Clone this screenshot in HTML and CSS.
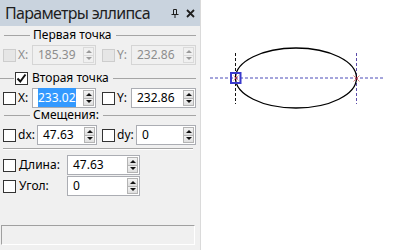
FILE: index.html
```html
<!DOCTYPE html>
<html>
<head>
    <title>Параметры эллипса</title>
    <link rel="stylesheet" href="styles.css">
</head>
<body>
    <div class="panel">
        <div class="title">
            <span class="title-text">Параметры эллипса</span>
            <svg class="pin" width="8" height="9" viewBox="0 0 8 9">
                <path d="M0.5 5.5h7M2.5 0.5h3v5M4 5.5v3.5M2.5 0.5v5" fill="none" stroke="#1e1e1e" stroke-width="1"/>
            </svg>
            <svg class="close" width="9" height="9" viewBox="0 0 9 9">
                <path d="M1 1l7 7M8 1l-7 7" stroke="#1e1e1e" stroke-width="1.8"/>
            </svg>
        </div>

        <div class="legend first">
            <span class="rule lead"></span>
            <span class="legend-text">Первая точка</span>
            <span class="rule"></span>
        </div>
        <div class="row">
            <span class="cb off"></span>
            <span class="lbl off w-xy">X:</span>
            <div class="spin off w-a"><span class="val">185.39</span><span class="arrows"><i><b class="up"></b></i><i><b class="down"></b></i></span></div>
            <span class="cb off gap"></span>
            <span class="lbl off w-xy">Y:</span>
            <div class="spin off w-b"><span class="val">232.86</span><span class="arrows"><i><b class="up"></b></i><i><b class="down"></b></i></span></div>
        </div>

        <div class="legend second">
            <span class="rule lead-short"></span>
            <span class="cb checked">
                <svg width="11" height="11" viewBox="0 0 11 11"><path d="M1.5 5.5l2.8 3l5.2-7" fill="none" stroke="#111" stroke-width="2"/></svg>
            </span>
            <span class="legend-text">Вторая точка</span>
            <span class="rule"></span>
        </div>
        <div class="row">
            <span class="cb"></span>
            <span class="lbl w-xy">X:</span>
            <div class="spin w-a"><span class="val"><span class="sel">233.02</span></span><span class="arrows"><i><b class="up"></b></i><i><b class="down"></b></i></span></div>
            <span class="cb gap"></span>
            <span class="lbl w-xy">Y:</span>
            <div class="spin w-b"><span class="val">232.86</span><span class="arrows"><i><b class="up"></b></i><i><b class="down"></b></i></span></div>
        </div>

        <div class="legend third">
            <span class="rule lead"></span>
            <span class="legend-text">Смещения:</span>
            <span class="rule"></span>
        </div>
        <div class="row">
            <span class="cb"></span>
            <span class="lbl w-dx">dx:</span>
            <div class="spin w-c"><span class="val">47.63</span><span class="arrows"><i><b class="up"></b></i><i><b class="down"></b></i></span></div>
            <span class="cb gap-small"></span>
            <span class="lbl w-dx">dy:</span>
            <div class="spin w-c"><span class="val">0</span><span class="arrows"><i><b class="up"></b></i><i><b class="down"></b></i></span></div>
        </div>

        <div class="separator"></div>

        <div class="row length">
            <span class="cb"></span>
            <span class="lbl w-long">Длина:</span>
            <div class="spin w-d"><span class="val">47.63</span><span class="arrows"><i><b class="up"></b></i><i><b class="down"></b></i></span></div>
        </div>
        <div class="row angle">
            <span class="cb"></span>
            <span class="lbl w-long">Угол:</span>
            <div class="spin w-d"><span class="val">0</span><span class="arrows"><i><b class="up"></b></i><i><b class="down"></b></i></span></div>
        </div>

        <div class="status"></div>
    </div>

    <div class="canvas">
        <svg width="192" height="250" viewBox="0 0 192 250">
            <line x1="9" y1="78" x2="182" y2="78" stroke="#4a4ab8" stroke-width="1" stroke-dasharray="3 2"/>
            <line x1="34.5" y1="53" x2="34.5" y2="104" stroke="#111" stroke-width="1" stroke-dasharray="3 2"/>
            <line x1="155.5" y1="53" x2="155.5" y2="104" stroke="#5a4aa8" stroke-width="1" stroke-dasharray="3 2"/>
            <ellipse cx="95" cy="78" rx="60.5" ry="30" fill="none" stroke="#000" stroke-width="1.3"/>
            <rect x="30" y="73" width="9.5" height="10" fill="none" stroke="#3a3acc" stroke-width="2"/>
            <path d="M32.5 75.5l5 5M37.5 75.5l-5 5" stroke="#e89090" stroke-width="1"/>
            <circle cx="35" cy="78" r="1" fill="#a02040"/>
            <path d="M152.5 75.5l6 6M158.5 75.5l-6 6" stroke="#e08080" stroke-width="1"/>
            <circle cx="155.5" cy="78.5" r="1" fill="#a02040"/>
        </svg>
    </div>
</body>
</html>
```

FILE: styles.css
```css
body {
    margin: 0;
    width: 393px;
    height: 250px;
    display: flex;
    overflow: hidden;
    background-color: #ffffff;
    font-family: "Noto Sans", "DejaVu Sans", sans-serif;
    font-size: 12px;
    color: #000000;
}

.panel {
    width: 200px;
    height: 250px;
    background-color: #f0f0f0;
    border-right: 1px solid #dadada;
    display: flex;
    flex-direction: column;
}

.title {
    height: 26px;
    flex: none;
    background-color: #c9d3de;
    display: flex;
    align-items: center;
    padding: 0 5px 0 5px;
    font-size: 16px;
    letter-spacing: -0.7px;
    color: #1e1e1e;
}

.title-text {
    flex: 1;
    line-height: 26px;
    white-space: nowrap;
}

.pin {
    margin-right: 7px;
}

/* group headers with etched lines */
.legend {
    display: flex;
    align-items: center;
    height: 14px;
    line-height: 14px;
}

.legend.first {
    margin-top: 2px;
}

.legend.second {
    margin-top: 6px;
}

.legend.third {
    margin-top: 0;
}

.rule {
    flex: 1;
    height: 1px;
    background-color: #a5a5a5;
    margin-right: 4px;
}

.rule.lead {
    flex: none;
    width: 26px;
    margin-left: 4px;
    margin-right: 3px;
}

.rule.lead-short {
    flex: none;
    width: 14px;
    margin-right: 1px;
}

.legend-text {
    margin-right: 4px;
}

.legend .cb {
    margin-left: 0;
    margin-right: 4px;
}

.row {
    display: flex;
    align-items: center;
    height: 20px;
    margin-top: 3px;
    padding-left: 3px;
}

.row.length {
    margin-top: 5px;
}

.row.angle {
    margin-top: 1px;
}

.cb {
    box-sizing: border-box;
    width: 13px;
    height: 13px;
    border: 1px solid #333333;
    background-color: #ffffff;
    display: flex;
    align-items: center;
    justify-content: center;
}

.cb.off {
    border-color: #cdcdcd;
    background-color: #e6e6e6;
}

.cb.gap {
    margin-left: 6px;
}

.cb.gap-small {
    margin-left: 5px;
}

.lbl {
    box-sizing: border-box;
    padding-left: 2px;
    line-height: 20px;
}

.lbl.off {
    color: #8d8d8d;
}

.w-xy { width: 16px; }
.w-dx { width: 21px; }
.w-long { width: 51px; padding-left: 3px; }

.spin {
    box-sizing: border-box;
    height: 20px;
    border: 1px solid #abadb3;
    background-color: #ffffff;
    display: flex;
}

.spin.off {
    border-color: #d5d5d5;
    background-color: #f0f0f0;
    color: #8d8d8d;
}

.w-a { width: 64px; }
.w-b { width: 65px; }
.w-c { width: 60px; }
.w-d { width: 73px; }

.val {
    flex: 1;
    padding-left: 5px;
    line-height: 18px;
    white-space: nowrap;
}

.sel {
    background-color: #3399ff;
    color: #ffffff;
    padding: 1px 0;
}

.arrows {
    width: 11px;
    display: flex;
    flex-direction: column;
    margin: 1px 1px 1px 0;
}

.arrows i {
    flex: 1;
    box-sizing: border-box;
    border: 1px solid #b4b4b4;
    background: linear-gradient(#f4f4f4, #dedede);
    display: flex;
    align-items: center;
    justify-content: center;
}

.arrows i + i {
    border-top: none;
}

.spin.off .arrows i {
    border-color: #dadada;
    background: #f0f0f0;
}

.up {
    width: 0;
    height: 0;
    border-left: 3px solid transparent;
    border-right: 3px solid transparent;
    border-bottom: 3px solid #111111;
}

.down {
    width: 0;
    height: 0;
    border-left: 3px solid transparent;
    border-right: 3px solid transparent;
    border-top: 3px solid #111111;
}

.spin.off .up {
    border-bottom-color: #9a9a9a;
}

.spin.off .down {
    border-top-color: #9a9a9a;
}

.separator {
    height: 1px;
    margin: 3px 7px 0 3px;
    background-color: #a5a5a5;
    border-bottom: 1px solid #ffffff;
}

.status {
    margin: auto 5px 5px 1px;
    height: 20px;
    box-sizing: border-box;
    border-top: 1px solid #a0a0a0;
    border-left: 1px solid #a0a0a0;
    border-bottom: 1px solid #ffffff;
    border-right: 1px solid #ffffff;
}

.canvas {
    flex: 1;
    background-color: #ffffff;
}

.canvas svg {
    display: block;
}
```
